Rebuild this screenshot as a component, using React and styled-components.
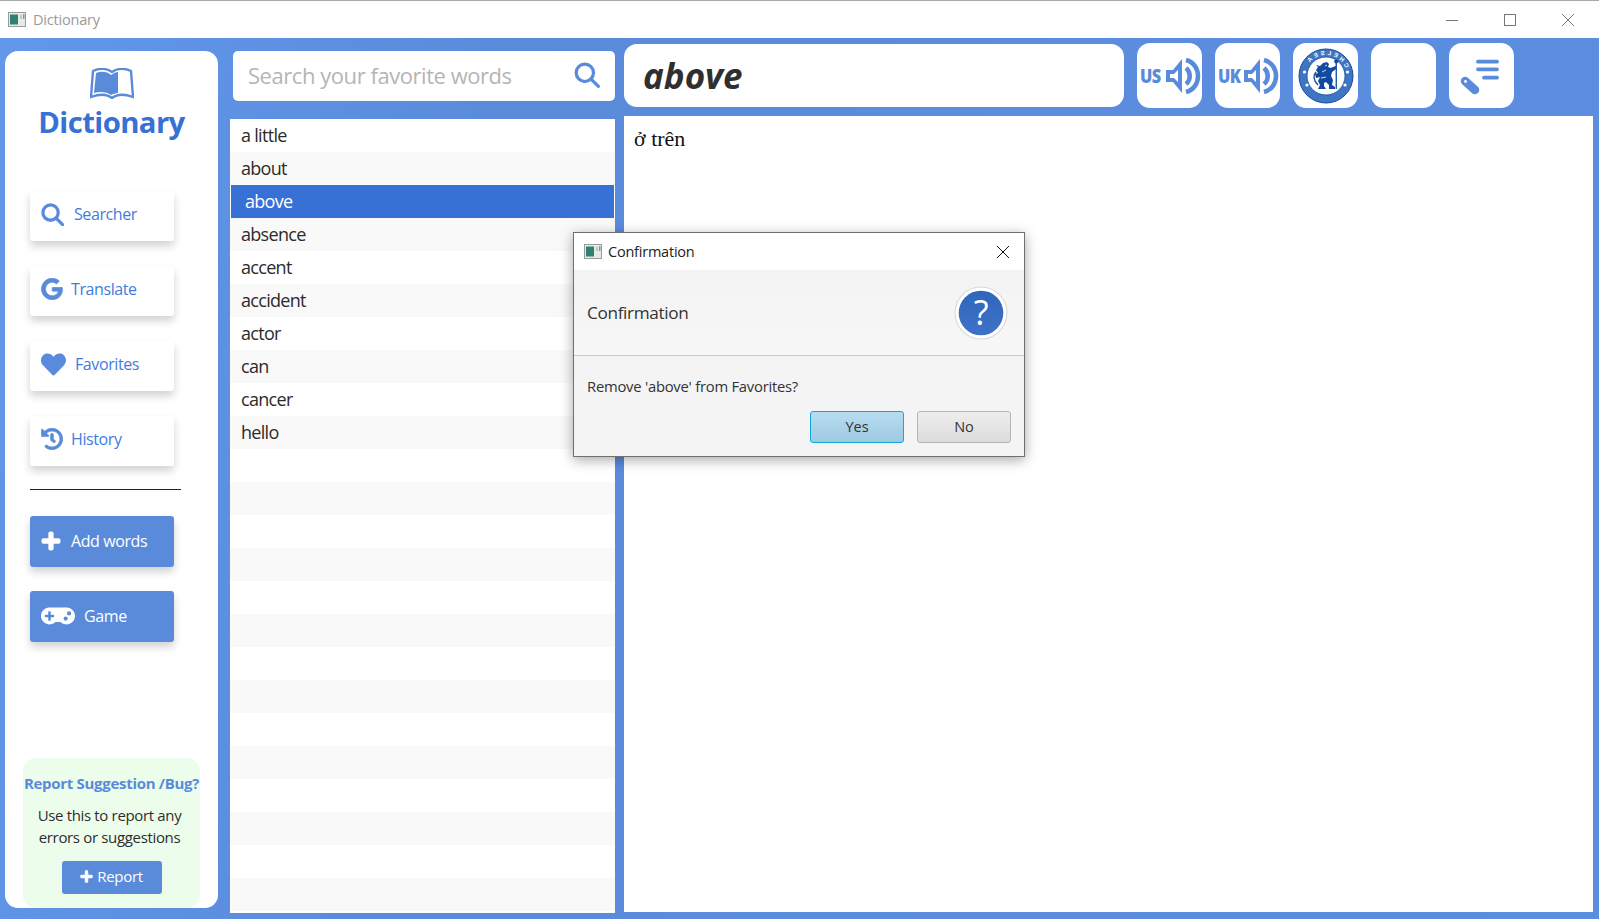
import React from 'react';
import styled, { createGlobalStyle } from 'styled-components';
import { FaGoogle, FaHeart, FaHistory, FaPlus, FaGamepad } from 'react-icons/fa';

const Global = createGlobalStyle`
  html, body { margin: 0; padding: 0; width: 1599px; height: 919px; overflow: hidden; background: #fff; }
  body { font-family: "Open Sans", "Noto Sans", sans-serif; }
  * { box-sizing: border-box; }
`;
const Win = styled.div`width: 1599px; height: 919px; display: flex; flex-direction: column; position: relative;`;
const TitleBar = styled.div`height: 38px; flex: none; background: #fff; border-top: 1px solid #a9a9a9; display: flex; align-items: center; padding-left: 8px; color: #9a9a9a; font-size: 14.5px; letter-spacing: -0.2px;`;
const TitleLabel = styled.span`margin-left: 7px;`;
const WinBtns = styled.div`margin-left: auto; margin-right: 2px; display: flex; align-items: center;`;
const WinBtn = styled.svg`width: 58px; height: 14px; stroke: #777; fill: none;`;
const Body = styled.div`flex: 1; display: flex; background: linear-gradient(100deg, #6297ea 0%, #5a8bdb 30%, #5c8ee0 100%); padding: 13px 0 0 5px; min-height: 0;`;
const Side = styled.aside`width: 213px; height: 857px; background: #fff; border-radius: 13px; padding-top: 17px; display: flex; flex-direction: column; flex: none;`;
const Brand = styled.div`display: flex; flex-direction: column; align-items: center; height: 123px;`;
const BrandName = styled.div`font-weight: 700; font-size: 29.3px; color: #3771d6; line-height: 36px; margin-top: 5px; letter-spacing: -0.6px;`;
const Nav = styled.nav`display: flex; flex-direction: column; gap: ${p => p.$gap || 25}px; padding-left: 25px;`;
const NavBtn = styled.div`
  width: 144px; height: ${p => p.$h || 50}px; border-radius: 3px; display: flex; align-items: center;
  padding: 0 0 ${p => p.$solid ? 2 : 4}px 11px; gap: ${p => p.$gap || 9}px; font-size: 16px; letter-spacing: -0.4px;
  background: ${p => p.$solid ? '#5a8bdb' : '#fff'}; color: ${p => p.$solid ? '#fff' : '#3f7ce0'};
  box-shadow: 0 5px 8px rgba(0,0,0,.18);
  svg { color: ${p => p.$solid ? '#fff' : '#5a8bdb'}; flex: none; }
`;
const Rule = styled.div`width: 151px; height: 1px; border-top: 1.5px solid #222; margin: 23px 0 26px 25px;`;
const Report = styled.div`margin: auto 0 0 18px; width: 177px; height: 150px; background: #edfdec; border-radius: 13px; display: flex; flex-direction: column; align-items: center; padding-top: 15px;`;
const ReportTitle = styled.div`font-weight: 700; font-size: 15px; color: #5a8bdb; white-space: nowrap; line-height: 20px; letter-spacing: -0.3px;`;
const ReportText = styled.div`font-size: 15px; line-height: 22px; color: #2d2d2d; text-align: center; margin: 11px 4px 0 0; letter-spacing: -0.34px;`;
const ReportBtn = styled.div`width: 100px; height: 33px; background: #5a8bdb; color: #fff; border-radius: 3px; margin-top: 13px; padding-bottom: 3px; display: flex; align-items: center; justify-content: center; gap: 4px; font-size: 15px; letter-spacing: -0.3px;`;
const Middle = styled.section`width: 385px; margin-left: 12px; flex: none; display: flex; flex-direction: column;`;
const Search = styled.div`margin: 0 0 0 3px; height: 50px; width: 382px; border-radius: 5px; background: #fff; display: flex; align-items: center; padding: 0 15px 2px 15px; justify-content: space-between; color: #b5b5b5; font-size: 22px; letter-spacing: -0.45px;`;
const List = styled.div`margin-top: 18px; height: 794px; background: #fff; display: flex; flex-direction: column; overflow: hidden;`;
const Row = styled.div`
  height: 33px; flex: none; padding-left: ${p => p.$sel ? 14 : 11}px; font-size: 18px; line-height: 33px; letter-spacing: -0.7px; color: #2b2b2b;
  background: ${p => p.$sel ? '#3771d6' : p.$odd ? '#f9f9f9' : '#fff'};
  ${p => p.$sel && 'color:#fff; margin: 0 1px;'}
`;
const Right = styled.section`margin-left: 9px; margin-top: -7px; flex: none; width: 969px; display: flex; flex-direction: column;`;
const Top = styled.div`display: flex; height: 65px; align-items: flex-start;`;
const Word = styled.div`width: 500px; height: 63px; border-radius: 13px; background: #fff; padding-left: 19px; font-size: 35px; font-weight: 700; font-style: italic; color: #2f2f2f; line-height: 63px; margin-right: 13px;`;
const IconBtn = styled.div`width: 65px; height: 65px; margin-top: -1px; border-radius: 13px; background: #fff; margin-right: 13px; display: flex; align-items: center; justify-content: ${p => p.$start ? 'flex-start' : 'center'}; padding-left: ${p => p.$start ? 3 : 0}px; color: #5a8bdb;`;
const SoundTag = styled.span`font-weight: 800; font-size: 19px; width: 25px; flex: none; letter-spacing: -0.6px; display: inline-block; transform: scaleX(.86); transform-origin: left; color: #5a8bdb;`;
const Definition = styled.div`margin-top: 7px; height: 796px; background: #fff; padding: 10px 10px; font-family: "Liberation Serif", serif; font-size: 22px; color: #111; line-height: 26px;`;
const Dialog = styled.div`position: absolute; left: 573px; top: 232px; width: 452px; height: 225px; border: 1px solid #6f6f6f; background: #f4f4f4; box-shadow: 0 3px 12px rgba(0,0,0,.35); display: flex; flex-direction: column;`;
const DlgTitle = styled.div`height: 37px; background: #fff; display: flex; align-items: center; padding-left: 10px; font-size: 14.5px; color: #222; letter-spacing: -0.22px; flex: none;`;
const DlgLabel = styled.span`margin-left: 6px;`;
const DlgClose = styled.svg`width: 14px; height: 14px; margin-left: auto; margin-right: 14px; stroke: #111; fill: none;`;
const DlgHead = styled.div`height: 86px; flex: none; background: linear-gradient(#f3f3f3, #f7f7f7); border-bottom: 1px solid #c8c8c8; display: flex; align-items: center; justify-content: space-between; padding: 0 16px 0 13px; font-size: 17.2px; color: #333; letter-spacing: -0.35px;`;
const DlgBody = styled.div`padding: 20px 13px 0; font-size: 14.8px; color: #333; letter-spacing: -0.24px; line-height: 20px;`;
const DlgActions = styled.div`display: flex; justify-content: flex-end; gap: 13px; padding: 15px 13px 0;`;
const DlgBtn = styled.div`width: 94px; height: 32px; border-radius: 3px; font-size: 14.5px; padding-bottom: 2px; display: flex; align-items: center; justify-content: center; color: #333;
  background: ${p => p.$def ? 'linear-gradient(#b6dcf0, #9fcae2)' : 'linear-gradient(#ededed, #dcdcdc)'};
  border: ${p => p.$def ? '1.5px solid #12a7e0' : '1px solid #b5b5b5'};
`;

const AppIcon = () => (
  <svg width="18" height="15" viewBox="0 0 18 15">
    <rect x=".5" y=".5" width="17" height="14" fill="#e8eaea" stroke="#9a9a9a"/>
    <rect x="2" y="2.5" width="8" height="10" fill="#2f7f73"/>
    <rect x="12" y="3" width="2" height="4" fill="#b8c8c2"/>
    <rect x="15" y="2" width="1.5" height="5" fill="#7d9c92"/>
  </svg>
);
const Lens = ({ size, w }) => (
  <svg width={size} height={size} viewBox="0 0 24 24" fill="none" stroke="#5a8bdb" strokeWidth={w} strokeLinecap="round">
    <circle cx="10" cy="10" r="8"/>
    <path d="M16 16 L22.5 22.5"/>
  </svg>
);
const Book = () => (
  <svg width="44" height="31" viewBox="0 0 44 31" fill="none">
    <path d="M3 3 C9 0 17 0 22 4 C27 0 35 0 41 3 L43 29 C35 26 27 26 22 30 C17 26 9 26 1 29 Z" fill="#fff" stroke="#5a8bdb" strokeWidth="2.4"/>
    <path d="M6 5 C11 3 17 3 21 7 C24 5 26 4 28 4 L28 25 C26 25 23 26 21 27 C17 24 10 23 4 25 Z" fill="#5a8bdb"/>
  </svg>
);
const SpeakerSvg = styled.svg`flex: none; overflow: visible;`;
const Speaker = () => (
  <SpeakerSvg width="37" height="36" viewBox="0 0 37 36" fill="none">
    <path d="M1 12 H8 L17 1 V35 L8 24 H1 Z M5 16 V20 H9 L13 24 V12 L9 16 Z" fill="#5a8bdb" fillRule="evenodd"/>
    <path d="M21 10 C26 14 26 22 21 26" stroke="#5a8bdb" strokeWidth="4.5"/>
    <path d="M21 2 C37 6 37 30 21 34" stroke="#5a8bdb" strokeWidth="4.5"/>
  </SpeakerSvg>
);
const Crest = () => (
  <svg width="56" height="56" viewBox="0 0 56 56">
    <circle cx="28" cy="28" r="27" fill="#3f76c4" stroke="#164a9c" strokeWidth="1"/>
    <circle cx="28" cy="28" r="19" fill="#fff" stroke="#164a9c" strokeWidth=".8"/>
    <defs>
      <path id="crest-top" d="M7 28 A21 21 0 0 1 49 28"/>
      <path id="crest-bot" d="M9 31 A20 20 0 0 0 47 31"/>
    </defs>
    <g transform="translate(56 0) scale(-1 1)">
      <text fontSize="6" fontWeight="700" fill="#fff" fontFamily="Liberation Sans" letterSpacing="2.4"><textPath href="#crest-top" startOffset="12%">CHELSEA</textPath></text>
      <text fontSize="3.6" fontWeight="700" fill="#fff" fontFamily="Liberation Sans"><textPath href="#crest-bot" startOffset="24%">FOOTBALL CLUB</textPath></text>
    </g>
    <circle cx="6.5" cy="24" r="1.6" fill="#fff"/><circle cx="49.5" cy="24" r="1.6" fill="#fff"/>
    <circle cx="9" cy="37" r="1.6" fill="#fff"/><circle cx="47" cy="37" r="1.6" fill="#fff"/>
    <path d="M25 15 L29 14 L31 16 L30 19 L33 20 L35 19 L38 18 L38 21 L34 24 L33 28 L35 32 L34 37 L37 39 L37 41 L31 41 L31 37 L28 34 L26 35 L26 38 L28 41 L20 41 L22 37 L20 33 L22 29 L18 30 L17 26 L20 25 L18 22 L20 19 L18 17 L22 18 Z" fill="#114a9e"/>
    <path d="M20 37 C15 32 15 27 18 24" fill="none" stroke="#114a9e" strokeWidth="1.4"/>
    <path d="M24 24 L28 22 M23 30 L28 29 M27 18 L29 17" stroke="#fff" strokeWidth=".8"/>
    <rect x="37.6" y="14" width="1.3" height="27" fill="#114a9e"/>
    <circle cx="38.2" cy="13.5" r="2" fill="#114a9e"/>
  </svg>
);
const Wrench = () => (
  <svg width="65" height="65" viewBox="0 0 65 65">
    <path d="M29 18.7 H48 M29 26.3 H48 M35 34.7 H48" stroke="#5a8bdb" strokeWidth="3.8" strokeLinecap="round"/>
    <path d="M16 38 L26 47" stroke="#5a8bdb" strokeWidth="8.5" strokeLinecap="round"/>
    <circle cx="16.5" cy="38.5" r="1.4" fill="#fff"/>
  </svg>
);
const Question = () => (
  <svg width="54" height="54" viewBox="0 0 52 52">
    <defs><linearGradient id="qg" x1="0" y1="0" x2="0" y2="1"><stop offset="0" stopColor="#2f66bc"/><stop offset="1" stopColor="#4071c8"/></linearGradient></defs>
    <circle cx="26" cy="26" r="25" fill="#fff" stroke="#d8d8d8"/>
    <circle cx="26" cy="26" r="21.5" fill="url(#qg)"/>
    <text x="26" y="38" textAnchor="middle" fontSize="33" fill="#fff" fontFamily="Open Sans">?</text>
  </svg>
);

const words = ['a little','about','above','absence','accent','accident','actor','can','cancer','hello'];
const rows = Array.from({ length: 24 }, (_, i) => words[i] || '');

export default function App() {
  return (
    <Win>
      <Global />
      <TitleBar>
        <AppIcon /><TitleLabel>Dictionary</TitleLabel>
        <WinBtns>
          <WinBtn viewBox="0 0 58 14"><path d="M23 7.5 H35"/></WinBtn>
          <WinBtn viewBox="0 0 58 14"><rect x="23.5" y="1.5" width="11" height="11"/></WinBtn>
          <WinBtn viewBox="0 0 58 14"><path d="M23 1 L35 13 M35 1 L23 13"/></WinBtn>
        </WinBtns>
      </TitleBar>
      <Body>
        <Side>
          <Brand>
            <Book />
            <BrandName>Dictionary</BrandName>
          </Brand>
          <Nav>
            <NavBtn $gap={10}><Lens size={23} w={3.4}/>Searcher</NavBtn>
            <NavBtn $gap={8}><FaGoogle size={22} stroke="currentColor" strokeWidth={16}/>Translate</NavBtn>
            <NavBtn $gap={9}><FaHeart size={25}/>Favorites</NavBtn>
            <NavBtn $gap={8}><FaHistory size={22} stroke="currentColor" strokeWidth={16}/>History</NavBtn>
          </Nav>
          <Rule />
          <Nav $gap={24}>
            <NavBtn $solid $h={51} $gap={10}><FaPlus size={20} stroke="currentColor" strokeWidth={40}/>Add words</NavBtn>
            <NavBtn $solid $h={51} $gap={9}><FaGamepad size={34}/>Game</NavBtn>
          </Nav>
          <Report>
            <ReportTitle>Report Suggestion /Bug?</ReportTitle>
            <ReportText>Use this to report any<br/>errors or suggestions</ReportText>
            <ReportBtn><FaPlus size={13} stroke="currentColor" strokeWidth={40}/>Report</ReportBtn>
          </Report>
        </Side>
        <Middle>
          <Search>Search your favorite words<Lens size={26} w={3}/></Search>
          <List>{rows.map((w, i) => <Row key={i} $odd={i % 2 === 1} $sel={w === 'above'}>{w}</Row>)}</List>
        </Middle>
        <Right>
          <Top>
            <Word>above</Word>
            <IconBtn $start><SoundTag>US</SoundTag><Speaker/></IconBtn>
            <IconBtn $start><SoundTag>UK</SoundTag><Speaker/></IconBtn>
            <IconBtn><Crest/></IconBtn>
            <IconBtn/>
            <IconBtn><Wrench/></IconBtn>
          </Top>
          <Definition>ở trên</Definition>
        </Right>
      </Body>
      <Dialog>
        <DlgTitle><AppIcon/><DlgLabel>Confirmation</DlgLabel>
          <DlgClose viewBox="0 0 14 14"><path d="M1 1 L13 13 M13 1 L1 13"/></DlgClose>
        </DlgTitle>
        <DlgHead>Confirmation<Question/></DlgHead>
        <DlgBody>Remove 'above' from Favorites?</DlgBody>
        <DlgActions><DlgBtn $def>Yes</DlgBtn><DlgBtn>No</DlgBtn></DlgActions>
      </Dialog>
    </Win>
  );
}
